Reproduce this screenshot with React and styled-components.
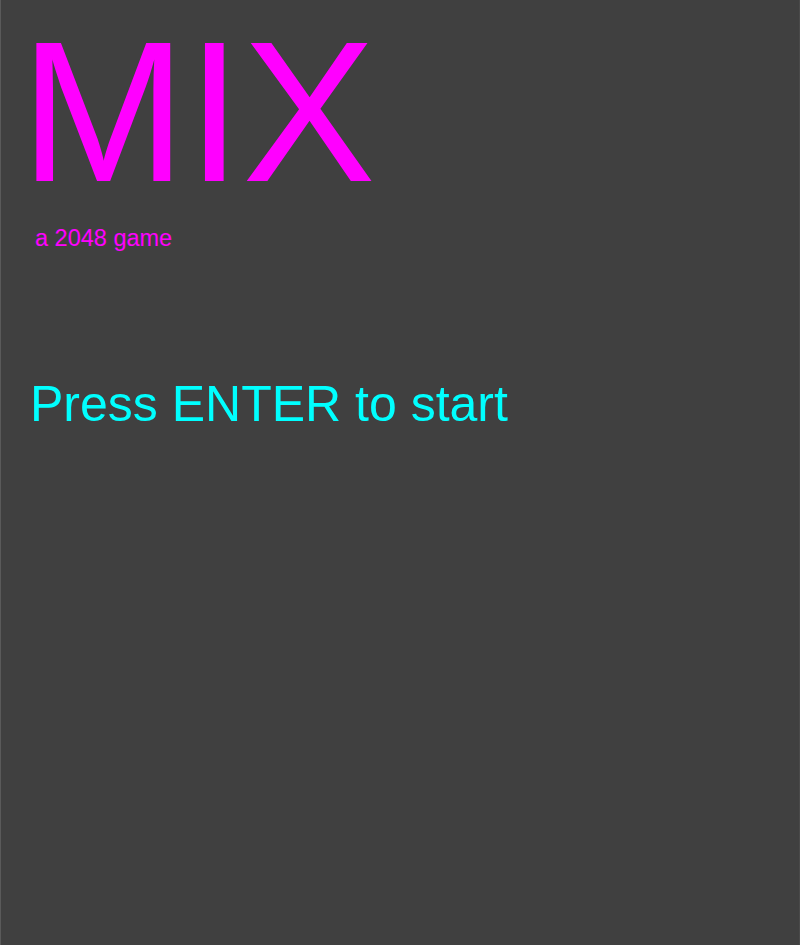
import React from "react";
import styled, { createGlobalStyle } from "styled-components";

const GlobalStyle = createGlobalStyle`
  html, body {
    margin: 0;
    padding: 0;
    background: #404040;
  }
  body {
    font-family: "Liberation Sans", Arial, sans-serif;
  }
`;

const Screen = styled.div`
  box-sizing: border-box;
  width: 800px;
  height: 945px;
  background: #404040;
  border-left: 1px solid #5a5a5a;
  border-right: 1px solid #4a4a4a;
  padding: 12px 0 0 19px;
  overflow: hidden;
`;

const Title = styled.h1`
  margin: 0;
  font-size: 200px;
  font-weight: 400;
  line-height: 1;
  color: #ff00ff;
`;

const Subtitle = styled.p`
  margin: 14px 0 0 15px;
  font-size: 23.5px;
  line-height: 24px;
  color: #ff00ff;
`;

const Prompt = styled.p`
  margin: 129px 0 0 10px;
  font-size: 50px;
  line-height: 1;
  color: #00ffff;
`;

function App() {
  return (
    <>
      <GlobalStyle />
      <Screen>
        <Title>MIX</Title>
        <Subtitle>a 2048 game</Subtitle>
        <Prompt>Press ENTER to start</Prompt>
      </Screen>
    </>
  );
}

export default App;
